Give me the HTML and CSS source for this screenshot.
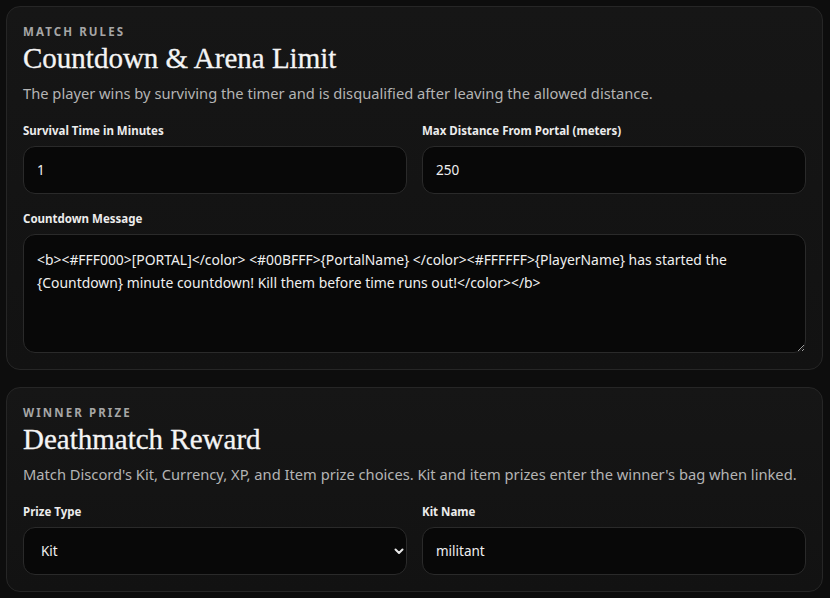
FILE: index.html
```html
<!DOCTYPE html>
<html>
<head>
<meta charset="utf-8">
<link rel="stylesheet" href="styles.css">
</head>
<body>
<div class="page">
  <section class="card">
    <div class="eyebrow">MATCH RULES</div>
    <h2 class="title">Countdown &amp; Arena Limit</h2>
    <p class="desc">The player wins by surviving the timer and is disqualified after leaving the allowed distance.</p>
    <div class="grid">
      <label class="field">
        <span class="label">Survival Time in Minutes</span>
        <input class="input" type="text" value="1">
      </label>
      <label class="field">
        <span class="label">Max Distance From Portal (meters)</span>
        <input class="input" type="text" value="250">
      </label>
      <label class="field full">
        <span class="label">Countdown Message</span>
        <textarea class="input area">&lt;b&gt;&lt;#FFF000&gt;[PORTAL]&lt;/color&gt; &lt;#00BFFF&gt;{PortalName} &lt;/color&gt;&lt;#FFFFFF&gt;{PlayerName} has started the {Countdown} minute countdown! Kill them before time runs out!&lt;/color&gt;&lt;/b&gt;</textarea>
      </label>
    </div>
  </section>
  <section class="card">
    <div class="eyebrow">WINNER PRIZE</div>
    <h2 class="title">Deathmatch Reward</h2>
    <p class="desc">Match Discord's Kit, Currency, XP, and Item prize choices. Kit and item prizes enter the winner's bag when linked.</p>
    <div class="grid">
      <label class="field">
        <span class="label">Prize Type</span>
        <span class="select-wrap">
          <select class="input select">
            <option>Kit</option>
            <option>Currency</option>
            <option>XP</option>
            <option>Item</option>
          </select>
          <svg class="chev" width="10" height="7" viewBox="0 0 10 7"><path d="M1.5 1.5 L5 5 L8.5 1.5" fill="none" stroke="#e8e8e8" stroke-width="2" stroke-linecap="round" stroke-linejoin="round"/></svg>
        </span>
      </label>
      <label class="field">
        <span class="label">Kit Name</span>
        <input class="input" type="text" value="militant">
      </label>
    </div>
  </section>
</div>
</body>
</html>
```
FILE: styles.css
```css
html, body {
  margin: 0;
  padding: 0;
  background: #0d0d0d;
}
body {
  font-family: "Noto Sans", "Open Sans", sans-serif;
  color: #e8e8e8;
}
.page {
  padding: 6px 7px 0 6px;
  display: flex;
  flex-direction: column;
  gap: 17px;
}
.card {
  background: linear-gradient(180deg, #161616 0%, #121212 100%);
  border: 1px solid #262626;
  border-radius: 14px;
  padding: 18px 16px 16px 16px;
}
.eyebrow {
  font-size: 11.5px;
  font-weight: 700;
  letter-spacing: 2.1px;
  color: #a6a6a6;
  line-height: 14px;
}
.title {
  font-family: "Liberation Serif", "Times New Roman", serif;
  font-weight: 400;
  font-size: 29px;
  line-height: 32px;
  margin: 3px 0 0 0;
  color: #f4f4f4;
  -webkit-text-stroke: 0.3px #f4f4f4;
}
.desc {
  margin: 9px 0 0 0;
  font-size: 14.7px;
  line-height: 20px;
  color: #b4b4b4;
}
.grid {
  margin-top: 20px;
  display: grid;
  grid-template-columns: 1fr 1fr;
  column-gap: 15px;
  row-gap: 17px;
}
.field {
  display: flex;
  flex-direction: column;
  gap: 7px;
}
.full {
  grid-column: 1 / -1;
}
.label {
  font-size: 11.5px;
  font-weight: 700;
  color: #ececec;
  line-height: 16px;
}
.input {
  box-sizing: border-box;
  width: 100%;
  height: 48px;
  background: #080808;
  border: 1px solid #2a2a2a;
  border-radius: 12px;
  color: #f0f0f0;
  font-family: "Noto Sans", "Open Sans", sans-serif;
  font-size: 13.5px;
  padding: 0 13px;
  outline: none;
}
.area {
  height: 119px;
  padding: 13px 13px;
  line-height: 23px;
  font-size: 13.9px;
  resize: vertical;
  display: block;
}
.select-wrap {
  position: relative;
  display: block;
}
.select {
  appearance: none;
  -webkit-appearance: none;
  padding-left: 17px;
}
.chev {
  position: absolute;
  right: 3px;
  top: 21px;
  pointer-events: none;
}
```
